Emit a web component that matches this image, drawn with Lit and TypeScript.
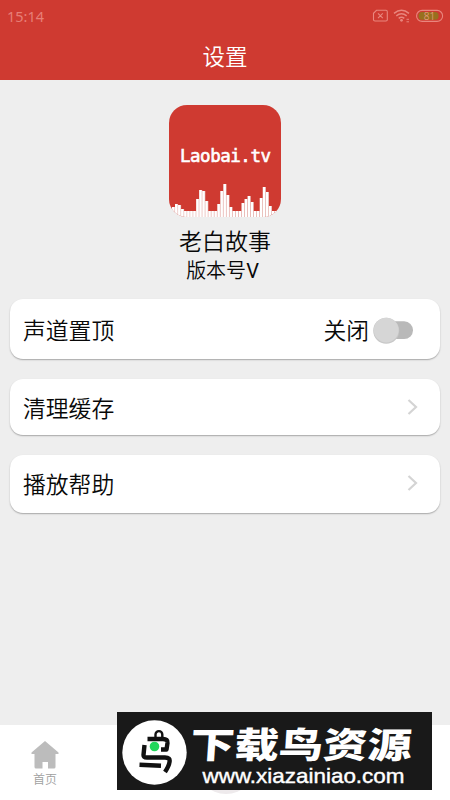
import { LitElement, html, svg, css } from "lit";
import { customElement } from "lit/decorators.js";

const BARS = [7, 10, 13, 12, 8, 6, 6, 6, 6, 18, 27, 26, 16, 6, 6, 6, 13, 26, 33, 22, 10, 6, 6, 6, 14, 18, 21, 15, 6, 6, 19, 30, 25, 11, 6, 6, 7];

@customElement("app-logo")
class AppLogo extends LitElement {
  static styles = css`
    :host { display: block; width: 112px; height: 112px; }
    svg { display: block; }
    .name { font: 400 17.5px "DejaVu Sans Mono", monospace; fill: #fff; stroke: #fff; stroke-width: 0.6px; }
  `;
  render() {
    const w = 112 / BARS.length;
    return html`<svg width="112" height="112" viewBox="0 0 112 112">
      <defs><clipPath id="c"><rect width="112" height="112" rx="18"></rect></clipPath></defs>
      <g clip-path="url(#c)">
        <rect width="112" height="112" fill="#cf3a31"></rect>
        ${BARS.map((h, i) => svg`<rect x=${i * w} y=${112 - h} width=${w} height=${h} fill="#e3b3af"></rect><rect x=${i * w} y=${112 - h} width=${w - 0.6} height=${h} fill="#fff"></rect>`)}
      </g>
      <text class="name" x="11" y="57" textLength="91" lengthAdjust="spacing">Laobai.tv</text>
    </svg>`;
  }
}

@customElement("site-banner")
class SiteBanner extends LitElement {
  static styles = css`
    :host { display: block; width: 315px; height: 78px; background: #191919; }
    svg { display: block; }
    .brand { font: 900 41px "Noto Sans CJK SC", sans-serif; fill: #fff; }
    .url { font: 20px "Liberation Sans", Arial, sans-serif; fill: #fff; stroke: #fff; stroke-width: 0.4px; }
  `;
  render() {
    return html`<svg width="315" height="78" viewBox="0 0 315 78">
      <circle cx="37.5" cy="40.5" r="32.2" fill="#fff"></circle>
      <g fill="none" stroke="#111" stroke-width="4.4" stroke-linejoin="round">
        <path d="M38.5 25 V22.5 a3.4 3.4 0 0 1 6.8 0 V25" stroke-width="2.4"></path>
        <path d="M30.5 27 H46 Q51 27 50.5 31 L49.5 37.5 H44"></path>
        <path d="M27.5 33 L26.5 43 Q26.5 45.5 30 45.5 H48 Q53.5 45.5 52.5 50 Q52 54 48 60"></path>
        <path d="M22.5 52.7 L44 53.7"></path>
      </g>
      <circle cx="37.5" cy="34.5" r="4.8" fill="#22d65b"></circle>
      <text class="brand" transform="translate(72.5 46) skewX(-4) scale(1.08 .87)" textLength="205" lengthAdjust="spacing">下载鸟资源</text>
      <text class="url" transform="translate(85.5 71) scale(1 1.04)" x="0" y="0" textLength="202" lengthAdjust="spacingAndGlyphs">www.xiazainiao.com</text>
    </svg>`;
  }
}

@customElement("app-root")
class AppRoot extends LitElement {
  static styles = css`
    :host {
      display: flex; flex-direction: column; position: relative; box-sizing: border-box;
      width: 450px; height: 800px; overflow: hidden; background: #eee; color: #080808;
      font-family: "Noto Sans CJK SC", sans-serif; font-weight: 350;
    }
    svg { display: block; }
    header { height: 80px; background: #cf3a31; color: #fff; display: flex; flex-direction: column; flex: none; }
    .status { height: 32px; display: flex; align-items: center; justify-content: space-between; padding: 0 6px 0 7px; color: #e77f77; }
    .time { font: 14.5px/20px "Noto Sans", sans-serif; }
    h1 { margin: 0; height: 48px; text-align: center; font-size: 22.5px; font-weight: 350; line-height: 47px; }
    main { flex: 1; display: flex; flex-direction: column; align-items: center; padding: 25px 10px 0; }
    .app { font-size: 23px; line-height: 28px; margin-top: 9px; }
    .version { font-size: 20px; line-height: 24px; margin: 4px 0 0 -5px; }
    .latin { font-family: Roboto, sans-serif; font-weight: 400; }
    .card {
      box-sizing: border-box; width: 430px; height: 60px; border-radius: 13px; background: #fff;
      box-shadow: 0 1px 1.5px rgba(0, 0, 0, .3); display: flex; align-items: center;
      justify-content: space-between; padding: 0 22px 0 13px; margin-top: 16px; font-size: 22.8px; line-height: 34px;
    }
    .card.switch, .card.clear { padding-top: 2px; }
    .card.clear { height: 56px; margin-top: 20px; }
    .card.clear svg { margin-top: -2px; }
    .card.help { height: 58px; margin-top: 20px; padding-bottom: 2px; }
    .card.help span { padding-top: 1px; }
    .toggle { display: flex; align-items: center; gap: 2px; padding-right: 3px; }
    nav { height: 75px; background: #fff; display: flex; flex: none; }
    .tab { width: 90px; display: flex; flex-direction: column; align-items: center; padding-top: 16px; box-sizing: border-box; color: #a0a0a0; font-size: 12px; line-height: 18px; gap: 1px; }
    .disc { position: absolute; left: 196px; top: 734px; width: 60px; height: 60px; border-radius: 50%; background: #eeeaec; }
    site-banner { position: absolute; left: 117px; top: 712px; }
  `;
  chevron() {
    return html`<svg width="12" height="18" viewBox="0 0 12 18"><path d="M2.5 2 L10 9 L2.5 16" fill="none" stroke="#d4d4d4" stroke-width="2.2"></path></svg>`;
  }
  render() {
    return html`
      <header>
        <div class="status">
          <span class="time">15:14</span>
          <svg width="72" height="20" viewBox="372 5.2 72 20">
            <g fill="none" stroke="#e9867e" stroke-width="1.1">
              <path d="M376.5 9.5 H386 Q387.3 9.5 387.3 11 V19 Q387.3 20.2 386 20.2 H375 Q373.5 20.2 373.5 19 V12.5 Z M378 12.5 L382.8 17.3 M382.8 12.5 L378 17.3"></path>
              <path d="M394 12.5 Q401.5 6.5 409 12.5 M396.3 15 Q401.5 10.8 406.7 15 M398.7 17.5 Q401.5 15.3 404.3 17.5" stroke-width="1.5"></path>
              <path d="M406.5 18.5 h2.5 M406.5 21 h2.5" stroke-width="1"></path>
              <rect x="416.6" y="9.6" width="26" height="11" rx="5.5"></rect>
            </g>
            <circle cx="401.5" cy="19.5" r="1.4" fill="#e9867e"></circle>
            <rect x="418.5" y="11.3" width="20" height="7.6" rx="3.5" fill="#98701f"></rect>
            <text x="429.5" y="18.8" font-size="10" text-anchor="middle" font-family="Noto Sans" fill="#f0a28e">81</text>
          </svg>
        </div>
        <h1>设置</h1>
      </header>
      <main>
        <app-logo></app-logo>
        <div class="app">老白故事</div>
        <div class="version">版本号<span class="latin">V</span></div>
        <div class="card switch">
          <span>声道置顶</span>
          <div class="toggle">
            <span>关闭</span>
            <svg width="44" height="30" viewBox="0 0 44 30">
              <rect x="7" y="6.3" width="35" height="17.7" rx="8.8" fill="#b9b9b9"></rect>
              <circle cx="15.2" cy="15.7" r="13" fill="#c8c8c8"></circle>
              <circle cx="15.2" cy="15.1" r="12.4" fill="#d6d6d6"></circle>
            </svg>
          </div>
        </div>
        <div class="card clear"><span>清理缓存</span>${this.chevron()}</div>
        <div class="card help"><span>播放帮助</span>${this.chevron()}</div>
      </main>
      <nav>
        <div class="tab">
          <svg width="28" height="28" viewBox="0 0 28 28"><path d="M14 0 L27.5 11.5 V13 H24.5 V26 Q24.5 27.5 23 27.5 H17 V21 H11.5 V27.5 H5 Q3.5 27.5 3.5 26 V13 H.5 V11.5 Z" fill="#bcbcbc"></path></svg>
          <span>首页</span>
        </div>
      </nav>
      <div class="disc"></div>
      <site-banner></site-banner>
    `;
  }
}
